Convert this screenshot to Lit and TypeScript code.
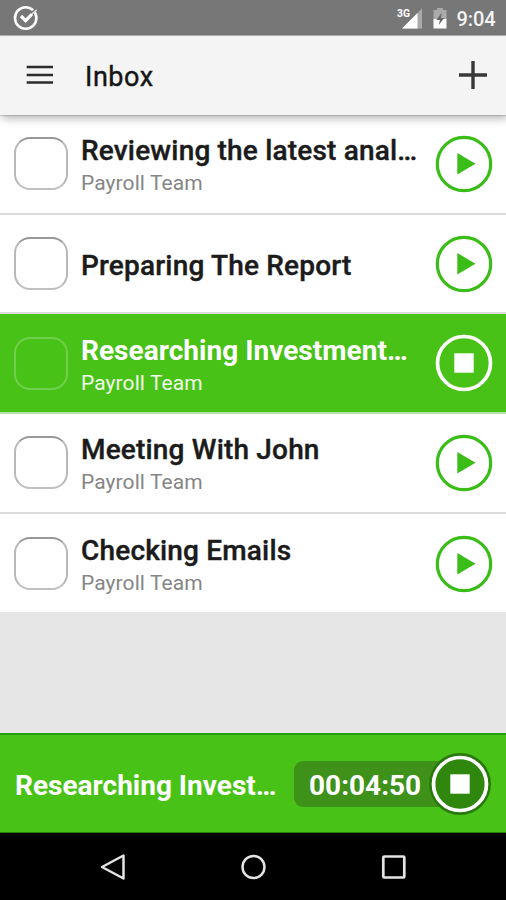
import { LitElement, html, css, svg, nothing } from "lit";
import { customElement, property } from "lit/decorators.js";
import { classMap } from "lit/directives/class-map.js";

interface Task {
  title: string;
  project?: string;
  running?: boolean;
}

const TASKS: Task[] = [
  { title: "Reviewing the latest anal…", project: "Payroll Team" },
  { title: "Preparing The Report" },
  { title: "Researching Investment…", project: "Payroll Team", running: true },
  { title: "Meeting With John", project: "Payroll Team" },
  { title: "Checking Emails", project: "Payroll Team" },
];

@customElement("status-bar")
export class StatusBar extends LitElement {
  static styles = css`
    :host {
      display: flex;
      align-items: center;
      height: 36px;
      padding: 0 10.500px 0 12px;
      background: #777;
      border-bottom: 1px solid #b4b4b4;
      box-sizing: border-box;
      color: #fff;
    }
    .app { margin-right: auto; margin-top: 1px; }
    .signal { margin-right: 10px; }
    .battery { margin-right: 9.500px; }
    svg { display: block; }
    .net { font: 700 11px Roboto, sans-serif; fill: #fff; }
    .time { font-size: 20px; font-weight: 500; line-height: 36px; letter-spacing: -0.1px; margin-top: 2px; color: #f4f4f4; }
  `;
  render() {
    return html`
      <svg class="app" width="28" height="28" viewBox="0 0 28 28" fill="none">
        <circle cx="13.7" cy="14" r="10.7" stroke="#fff" stroke-width="2.6" />
        <path d="M19.500 9.500L24.500 4.500" stroke="#777" stroke-width="2.500" />
        <path d="M9 12l4.600 4.600L20 10" stroke="#fff" stroke-width="3.200" />
        <path d="M20 10L24.600 5.800" stroke="#e4e4e4" stroke-width="1.300" />
      </svg>
      <svg class="signal" width="26" height="22" viewBox="0 0 26 22">
        <path d="M5 21.500L25 1.500v20z" fill="#aaa" />
        <path d="M5 21.500L20.500 6V21.500z" fill="#fff" />
        <text class="net" x="0" y="10" textLength="13" lengthAdjust="spacingAndGlyphs">3G</text>
      </svg>
      <svg class="battery" width="14" height="22" viewBox="0 0 14 22">
        <path d="M4 1h6v2h3.500v9H0.500V3H4z" fill="#aaa" />
        <path d="M0.500 12h13v9.500H0.500z" fill="#fff" />
        <path d="M8.800 5.500L3.500 13h3.500l-1.200 5L11.200 11H7.800z" fill="#666" />
      </svg>
      <span class="time">9:04</span>
    `;
  }
}

@customElement("app-header")
export class AppHeader extends LitElement {
  static styles = css`
    :host {
      display: flex;
      align-items: center;
      position: relative;
      z-index: 1;
      height: 79px;
      padding: 0 18px 0 26px;
      box-sizing: border-box;
      background: #f4f4f4;
      box-shadow: 0 1px 1px rgba(0, 0, 0, 0.14), 2px 4px 8px rgba(0, 0, 0, 0.26);
    }
    svg { display: block; flex: none; margin-top: -1px; }
    .title {
      flex: 1;
      margin-left: 31px;
      font-size: 27px;
      font-weight: 400;
      letter-spacing: 0.55px;
      color: #151515;
      padding-top: 2px;
      -webkit-text-stroke: 0.4px #151515;
    }
  `;
  render() {
    return html`
      <svg width="28" height="22" viewBox="0 0 28 22">
        <path d="M0.700 3h26.300M0.700 11h26.300M0.700 18.500h26.300" stroke="#2c2c2c" stroke-width="2.500" />
      </svg>
      <div class="title">Inbox</div>
      <svg width="30" height="30" viewBox="0 0 30 30">
        <path d="M1 15h28M15 1v28" stroke="#383838" stroke-width="3.400" />
      </svg>
    `;
  }
}

@customElement("timer-button")
export class TimerButton extends LitElement {
  @property({ type: Boolean }) running = false;
  @property({ type: Boolean }) filled = false;
  static styles = css`
    :host { display: block; flex: none; }
    svg { display: block; overflow: visible; }
  `;
  render() {
    return html`
      <svg width="58" height="58" viewBox="0 0 58 58">
        ${this.filled ? svg`<circle cx="29" cy="29" r="31" fill="#29780d" />` : nothing}
        ${this.running
          ? svg`<circle cx="29" cy="29" r="26.500" fill=${this.filled ? "#2f870e" : "none"} stroke="#fff" stroke-width="3.700" />
              <path d="M19.300 19.300h19.400v19.400H19.300z" fill="#fff" />`
          : svg`<circle cx="29" cy="29" r="26.700" fill="#fff" stroke="#3abd17" stroke-width="3.200" />
              <path d="M22.300 18L40.500 28.800 22.300 39.600z" fill="#3abd17" />`}
      </svg>
    `;
  }
}

@customElement("task-row")
export class TaskRow extends LitElement {
  @property({ attribute: false }) task!: Task;
  @property({ type: Boolean }) last = false;
  static styles = css`
    :host { display: block; }
    .row {
      display: flex;
      align-items: center;
      height: 99.700px;
      box-sizing: border-box;
      padding: 0 12.600px 0 14px;
      background: #fff;
      border-bottom: 2px solid #dcdcdc;
      color: #1b1b1b;
    }
    .row.running { background: #49c217; color: #fff; border-bottom-color: #b9dfab; }
    .row.last { border-bottom: 0; height: 98.700px; padding-top: 1px; }
    .check {
      flex: none;
      width: 53.500px;
      height: 53px;
      box-sizing: border-box;
      border: 2px solid #b8b8b8;
      border-top-color: #989898;
      border-bottom-color: #c0c0c0;
      border-radius: 16px;
    }
    .running .check { border-color: #71d04b; }
    .text { flex: 1; min-width: 0; margin: 0 12px 0 13.500px; }
    .title {
      font-size: 28px;
      line-height: 34px;
      font-weight: 500;
      letter-spacing: 0.18px;
      white-space: nowrap;
      -webkit-text-stroke: 0.4px currentColor;
      padding-top: 4px;
    }
    .project { font-size: 21px; line-height: 28px; letter-spacing: 0.080px; color: #858585; margin-top: 1px; }
    .running .title { font-weight: 700; letter-spacing: 0.03px; -webkit-text-stroke: 0; padding-top: 5px; }
    .running .project { color: #f1fbea; }
  `;
  render() {
    const t = this.task;
    return html`
      <div class=${classMap({ row: true, running: !!t.running, last: this.last })}>
        <div class="check"></div>
        <div class="text">
          <div class="title">${t.title}</div>
          ${t.project ? html`<div class="project">${t.project}</div>` : nothing}
        </div>
        <timer-button ?running=${!!t.running}></timer-button>
      </div>
    `;
  }
}

@customElement("timer-bar")
export class TimerBar extends LitElement {
  static styles = css`
    :host {
      display: flex;
      align-items: center;
      height: 100px;
      box-sizing: border-box;
      padding: 0 17px 0 15px;
      background: #49c217;
      border-top: 2px solid #22a012;
      border-bottom: 1px solid #2c7a10;
      color: #fff;
      font-weight: 700;
    }
    .title {
      width: 264px;
      font-size: 28px;
      line-height: 34px;
      white-space: nowrap;
      padding-top: 4px;
    }
    .clock {
      flex: 1;
      height: 46px;
      line-height: 49px;
      margin-left: 15px;
      margin-right: -20px;
      padding-left: 15px;
      border-radius: 9px;
      background: #3e9219;
      font-size: 28px;
    }
    timer-button { position: relative; }
  `;
  render() {
    return html`
      <div class="title">Researching Invest…</div>
      <div class="clock">00:04:50</div>
      <timer-button running filled></timer-button>
    `;
  }
}

@customElement("nav-bar")
export class NavBar extends LitElement {
  static styles = css`
    :host {
      display: flex;
      justify-content: center;
      align-items: center;
      gap: 112px;
      height: 67px;
      background: #000;
    }
    svg { display: block; }
  `;
  render() {
    return html`
      <svg width="28" height="28" viewBox="0 0 28 28" fill="none" stroke="#e4e4e4" stroke-width="2.500">
        <path d="M24.500 2.500v23L3 14z" stroke-linejoin="round" />
      </svg>
      <svg width="28" height="28" viewBox="0 0 28 28" fill="none" stroke="#e4e4e4" stroke-width="2.500">
        <circle cx="14.500" cy="14" r="11" />
      </svg>
      <svg width="28" height="28" viewBox="0 0 28 28" fill="none" stroke="#e4e4e4" stroke-width="2.700">
        <rect x="4.300" y="3.500" width="21" height="21" rx="1" />
      </svg>
    `;
  }
}

@customElement("app-root")
export class AppRoot extends LitElement {
  static styles = css`
    :host {
      display: flex;
      flex-direction: column;
      width: 506px;
      height: 900px;
      overflow: hidden;
      background: #e6e6e6;
      font-family: Roboto, sans-serif;
    }
    status-bar, app-header, timer-bar, nav-bar { flex: none; }
    .list { flex: 1; min-height: 0; }
  `;
  render() {
    return html`
      <status-bar></status-bar>
      <app-header></app-header>
      <div class="list">
        ${TASKS.map((t, i) => html`<task-row .task=${t} ?last=${i === TASKS.length - 1}></task-row>`)}
      </div>
      <timer-bar></timer-bar>
      <nav-bar></nav-bar>
    `;
  }
}
